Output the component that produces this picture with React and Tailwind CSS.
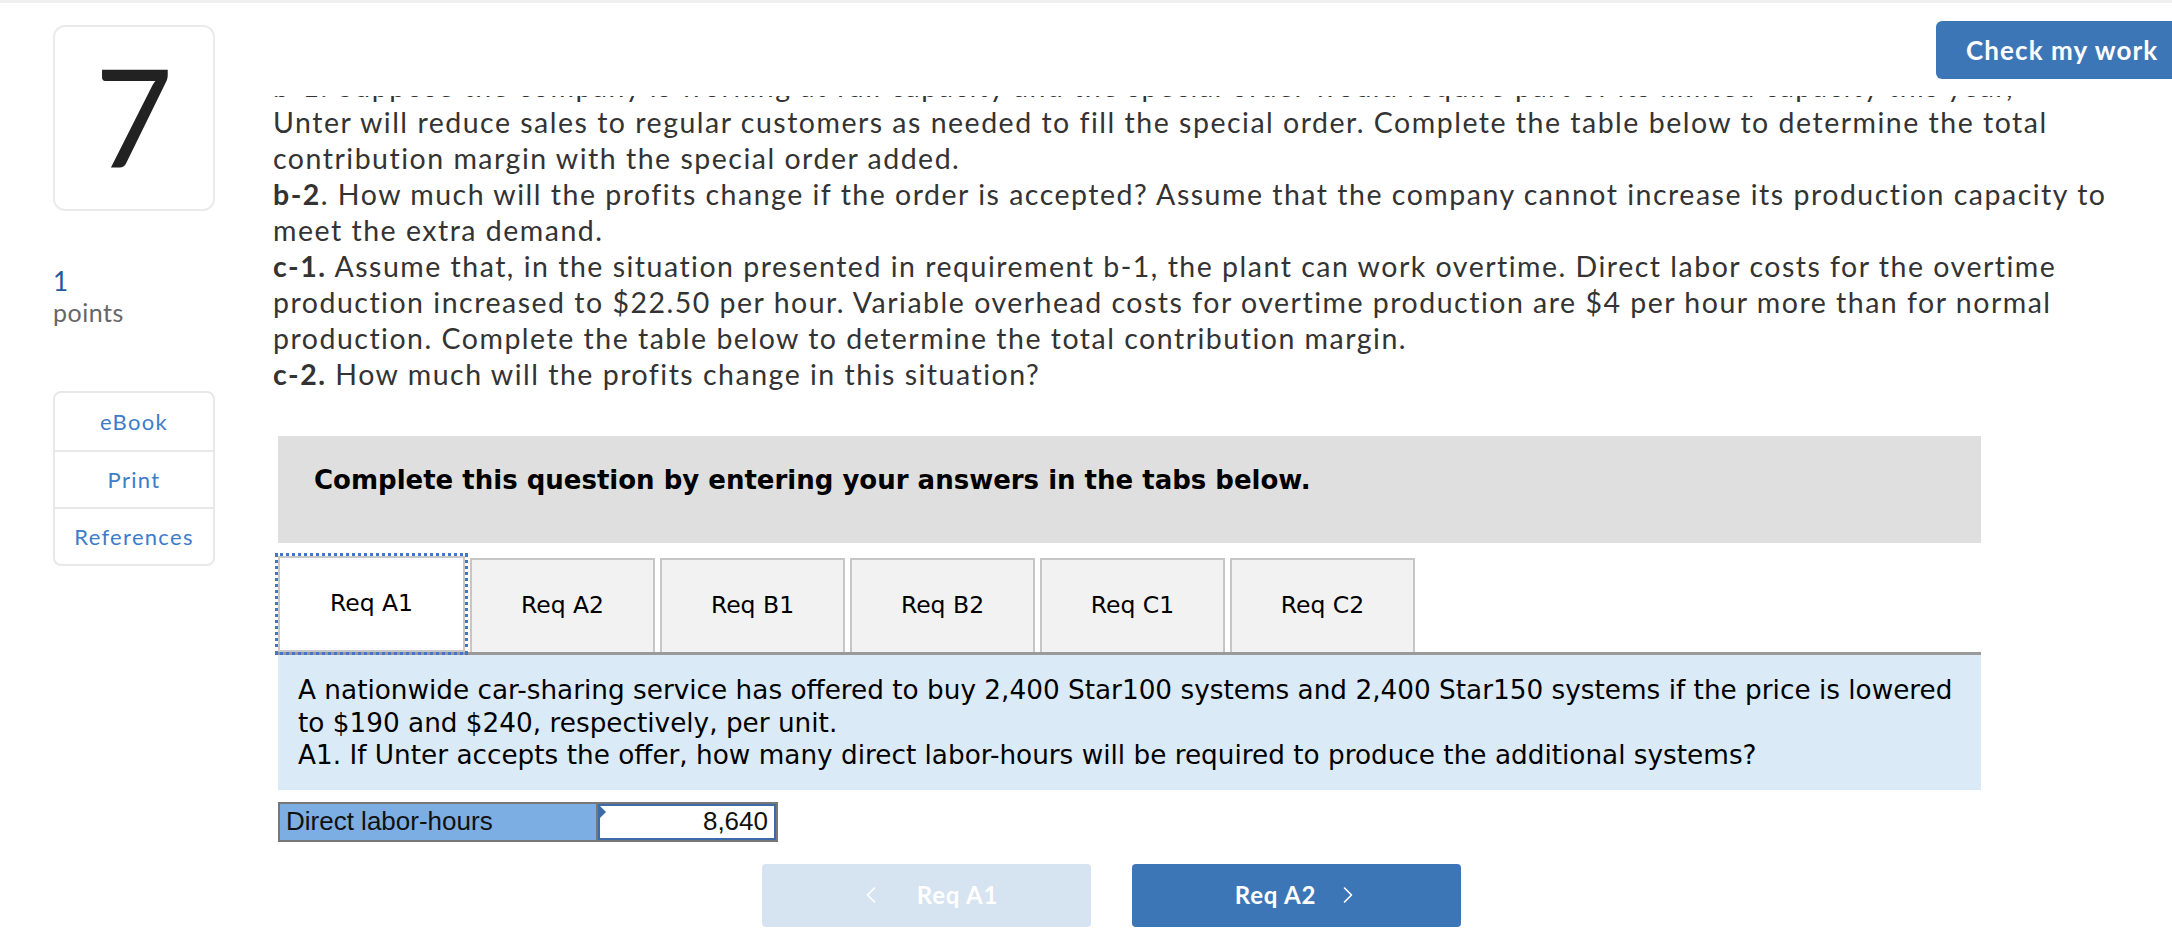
import React from 'react';
import { ChevronLeft, ChevronRight } from 'lucide-react';

const tabs = ['Req A1', 'Req A2', 'Req B1', 'Req B2', 'Req C1', 'Req C2'];

// question text, one entry per rendered line
const lines = [
  [null, 'b-1. Suppose the company is working at full capacity and the special order would require part of its limited capacity this year,'],
  [null, 'Unter will reduce sales to regular customers as needed to fill the special order. Complete the table below to determine the total'],
  [null, 'contribution margin with the special order added.'],
  ['b-2', '. How much will the profits change if the order is accepted? Assume that the company cannot increase its production capacity to'],
  [null, 'meet the extra demand.'],
  ['c-1.', ' Assume that, in the situation presented in requirement b-1, the plant can work overtime. Direct labor costs for the overtime'],
  [null, 'production increased to $22.50 per hour. Variable overhead costs for overtime production are $4 per hour more than for normal'],
  [null, 'production. Complete the table below to determine the total contribution margin.'],
  ['c-2.', ' How much will the profits change in this situation?'],
];

function Sidebar() {
  return (
    <aside className="w-[162px] shrink-0 ml-[53px] pt-[22px]">
      <div className="h-[186px] border-2 border-[#ebebeb] rounded-[12px] flex items-center justify-center pb-[6px] text-[135px] leading-none text-[#222]">
        7
      </div>
      <div className="mt-[54px] text-[26px] leading-[33px] text-[#1f5a9e]">1</div>
      <div className="-mt-[2px] text-[25px] leading-[33px] tracking-[0.5px] text-[#666]">points</div>
      <div className="mt-[62px] border-2 border-[#e8e8e8] rounded-[8px] text-[22px] tracking-[1.3px] text-[#3d7cc9] text-center">
        <div className="h-[59px] flex items-center justify-center border-b-2 border-[#e8e8e8]">eBook</div>
        <div className="h-[57px] flex items-center justify-center border-b-2 border-[#e8e8e8]">Print</div>
        <div className="h-[55px] flex items-center justify-center">References</div>
      </div>
    </aside>
  );
}

export default function App() {
  return (
    <div className="relative w-full h-[950px] overflow-hidden bg-white border-t-[3px] border-[#efefef] font-['Lato',sans-serif]">
      <button className="absolute top-[18px] left-[1936px] w-[260px] h-[58px] rounded-l-[6px] bg-[#3d76b6] text-white text-[26px] tracking-[1.1px] font-bold text-left pl-[30px]">
        Check my work
      </button>

      <div className="flex">
        <Sidebar />

        <main className="ml-[58px] w-[1880px]">
          {/* scrolled question text, first line cut by the toolbar */}
          <div className="mt-[93px] h-[296px] overflow-hidden">
            <div className="-mt-[28px] text-[28.5px] leading-[36px] tracking-[1.5px] text-[#333]">
              {lines.map(([b, t], i) => (
                <div key={i} className="whitespace-nowrap">
                  {b && <b>{b}</b>}
                  {t}
                </div>
              ))}
            </div>
          </div>

          <div className="ml-[5px] w-[1703px] font-['DejaVu_Sans',sans-serif]">
            <div className="mt-[44px] h-[107px] bg-[#dfdfdf] pl-[36px] pt-[29px] text-[26px] leading-[30px] font-bold text-black">
              Complete this question by entering your answers in the tabs below.
            </div>

            <div className="mt-[15px] flex gap-[5px]">
              {tabs.map((t, i) => (
                <div
                  key={t}
                  className={
                    i === 0
                      ? 'relative z-10 w-[187px] h-[96px] -mt-[2px] -mb-[3px] bg-white border-2 border-[#c8c8c8] outline-[3px] outline-dotted outline-[#3f78c4] flex items-center justify-center text-[23.5px] text-black'
                      : 'w-[185px] h-[94px] bg-[#f2f2f2] border-2 border-[#c6c6c6] border-b-0 flex items-center justify-center text-[23.5px] text-black'
                  }
                >
                  {t}
                </div>
              ))}
            </div>

            <div className="border-t-[3px] border-[#9a9a9a] bg-[#dbeaf7] pl-[20px] pt-[19px] pb-[18px] text-[26.3px] leading-[32.5px] text-black">
              A nationwide car-sharing service has offered to buy 2,400 Star100 systems and 2,400 Star150 systems if the price is lowered
              <br />
              to $190 and $240, respectively, per unit.
              <br />
              A1. If Unter accepts the offer, how many direct labor-hours will be required to produce the additional systems?
            </div>

            <div className="mt-[12px] flex w-[500px] h-[40px] border-2 border-[#777] font-['Liberation_Sans',sans-serif] text-[26px] text-[#111]">
              <div className="w-[318px] bg-[#7caee3] border-r-2 border-[#777] flex items-center pl-[6px]">
                Direct labor-hours
              </div>
              <div className="relative flex-1 bg-white border-2 border-[#3d6aa8] flex items-center justify-end pr-[6px]">
                <span className="absolute left-0 top-0 w-0 h-0 border-t-[6px] border-b-[6px] border-l-[6px] border-t-transparent border-b-transparent border-l-[#3d6aa8]" />
                8,640
              </div>
            </div>

            <div className="mt-[22px] ml-[484px] flex gap-[41px] font-['Lato',sans-serif] text-[24px] tracking-[0.8px] font-bold text-white">
              <div className="w-[329px] h-[63px] rounded-[4px] bg-[#d6e3f1] flex items-center justify-center gap-[32px] pl-[2px]">
                <ChevronLeft size={28} strokeWidth={1.4} />
                <span>Req A1</span>
              </div>
              <div className="w-[329px] h-[63px] rounded-[4px] bg-[#3d76b6] flex items-center justify-center gap-[18px] pl-[4px]">
                <span>Req A2</span>
                <ChevronRight size={28} strokeWidth={1.4} />
              </div>
            </div>
          </div>
        </main>
      </div>
    </div>
  );
}
